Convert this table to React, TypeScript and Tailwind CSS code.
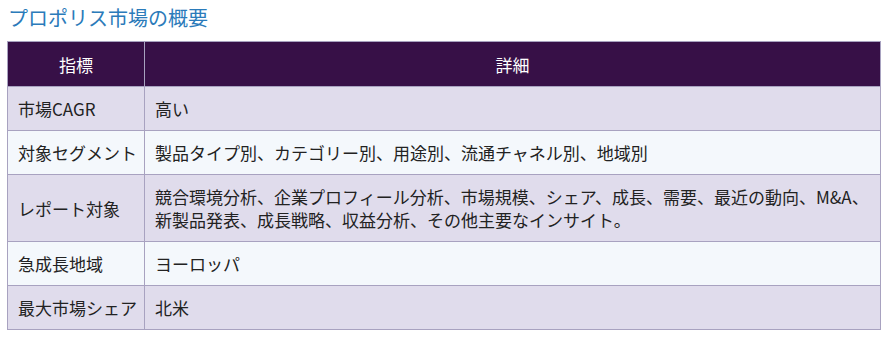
const rows: { label: string; detail: string }[] = [
  { label: '市場CAGR', detail: '高い' },
  { label: '対象セグメント', detail: '製品タイプ別、カテゴリー別、用途別、流通チャネル別、地域別' },
  {
    label: 'レポート対象',
    detail:
      '競合環境分析、企業プロフィール分析、市場規模、シェア、成長、需要、最近の動向、M&A、新製品発表、成長戦略、収益分析、その他主要なインサイト。',
  },
  { label: '急成長地域', detail: 'ヨーロッパ' },
  { label: '最大市場シェア', detail: '北米' },
];

export default function App() {
  return (
    <div
      className="w-[888px] h-[339px] bg-white px-[7px] pt-[4px]"
      style={{ fontFamily: '"Noto Sans CJK JP", "Noto Sans", sans-serif' }}
    >
      <h2 className="text-[20px] leading-[28px] text-[#2b7bba] pl-[1px] mb-[9px]">プロポリス市場の概要</h2>
      <table className="w-[874px] border-collapse table-fixed text-[17px] leading-[23px] text-[#222]">
        <colgroup>
          <col className="w-[137px]" />
          <col />
        </colgroup>
        <thead>
          <tr className="bg-[#371047] text-white">
            <th className="border border-[#a8a2c0] py-[10.5px] font-normal text-center">指標</th>
            <th className="border border-[#a8a2c0] py-[10.5px] font-normal text-center">詳細</th>
          </tr>
        </thead>
        <tbody>
          {rows.map((r, i) => (
            <tr key={r.label} className={i % 2 === 0 ? 'bg-[#e0dcec]' : 'bg-[#f4f8fc]'}>
              <td className="border border-[#a8a2c0] px-[10px] py-[10px] align-middle whitespace-nowrap">{r.label}</td>
              <td className="border border-[#a8a2c0] px-[10px] py-[10px] align-middle">{r.detail}</td>
            </tr>
          ))}
        </tbody>
      </table>
    </div>
  );
}
